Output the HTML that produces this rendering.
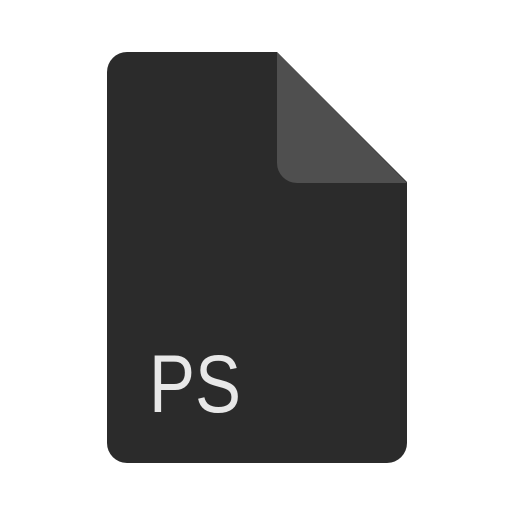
<!DOCTYPE html>
<html><head><style>html,body{margin:0;padding:0;background:#fff;width:512px;height:512px;overflow:hidden}</style></head>
<body>
<svg width="512" height="512" viewBox="0 0 512 512" xmlns="http://www.w3.org/2000/svg">
<path d="M127,52 H277 L407,182 V443 A20,20 0 0 1 387,463 H127 A20,20 0 0 1 107,443 V72 A20,20 0 0 1 127,52 Z" fill="#2b2b2b"/>
<path d="M277,52 V163 A20,20 0 0 0 297,183 H407 Z" fill="#4f4f4f"/>
<text x="149" y="412" font-family="Liberation Sans, sans-serif" font-size="82" fill="#e8e8e8" textLength="92" lengthAdjust="spacingAndGlyphs">PS</text>
</svg>
</body></html>
